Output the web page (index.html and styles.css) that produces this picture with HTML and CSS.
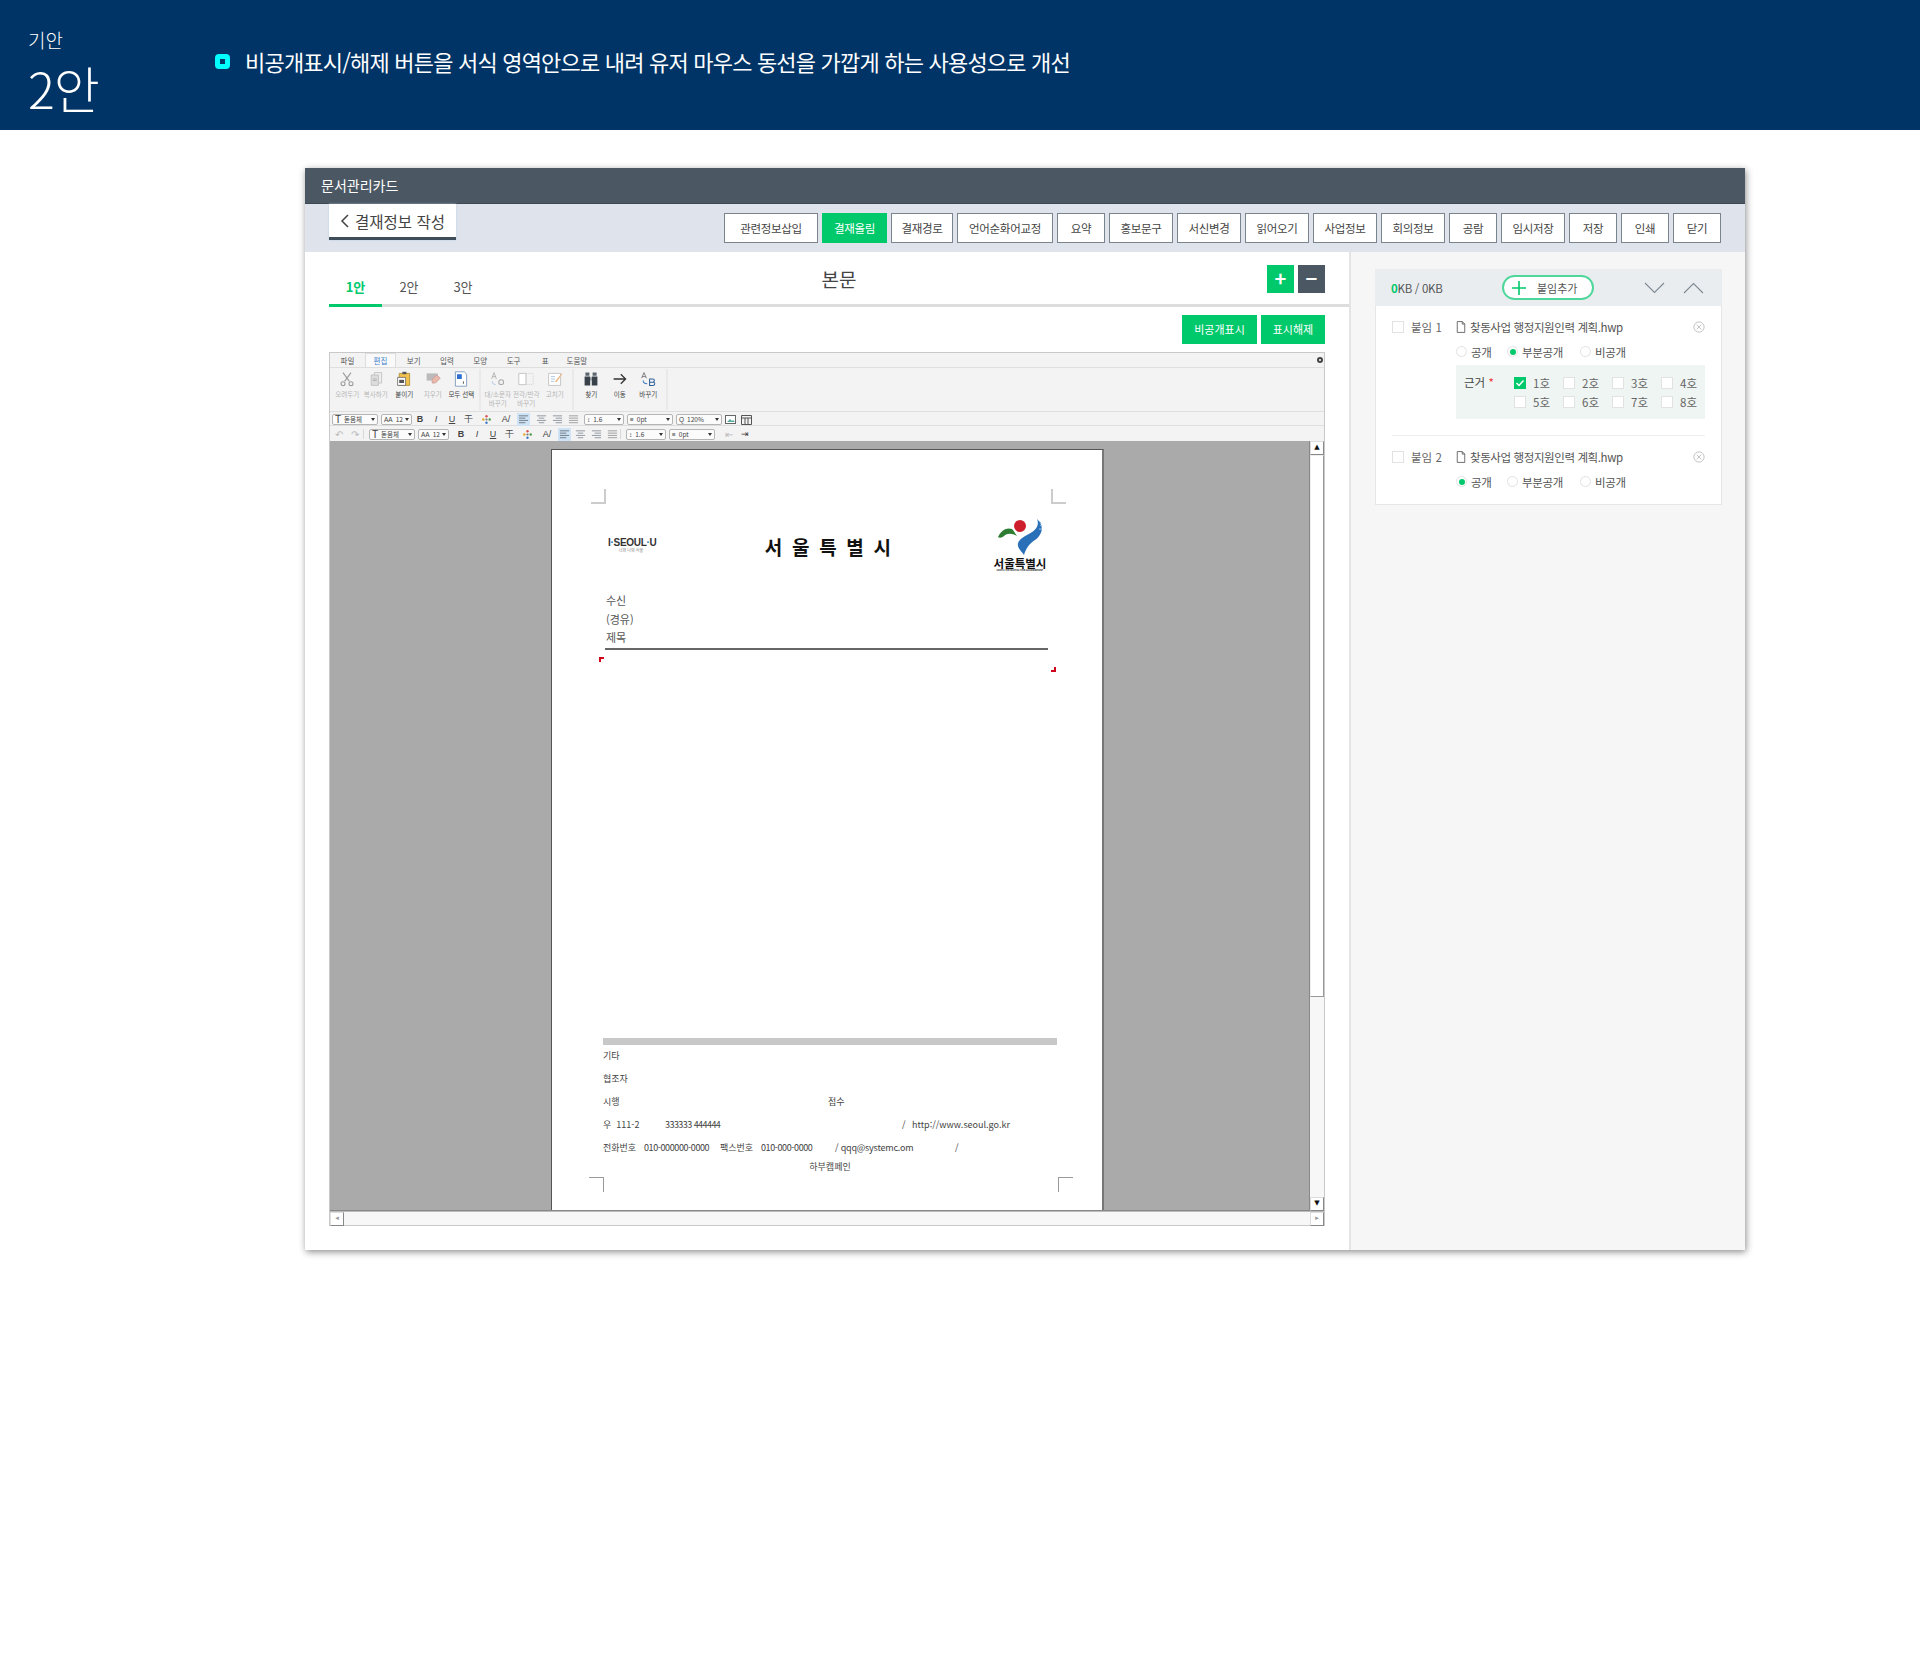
FILE: index.html
```html
<!DOCTYPE html>
<html lang="ko">
<head>
  <meta charset="UTF-8">
  <title>기안 2안</title>
  <link rel="stylesheet" href="styles.css">
</head>
<body>
  <svg class="defs" width="0" height="0">
    <symbol id="al" viewBox="0 0 12 12"><path d="M1 2h10M1 4.500h7M1 7h10M1 9.500h7" stroke="#6a7680" fill="none"/></symbol>
    <symbol id="ac" viewBox="0 0 12 12"><path d="M1 2h10M3 4.500h6M1 7h10M3 9.500h6" stroke="#8b949b" fill="none"/></symbol>
    <symbol id="ar" viewBox="0 0 12 12"><path d="M1 2h10M4 4.500h7M1 7h10M4 9.500h7" stroke="#8b949b" fill="none"/></symbol>
    <symbol id="aj" viewBox="0 0 12 12"><path d="M1 2h10M1 4.500h10M1 7h10M1 9.500h10" stroke="#9a9a9a" fill="none"/></symbol>
    <symbol id="pal" viewBox="0 0 12 12"><circle cx="6" cy="2.500" r="1.300" fill="#d9534f"/><circle cx="2.500" cy="6" r="1.300" fill="#e3a52b"/><circle cx="9.500" cy="6" r="1.300" fill="#4a9c4a"/><circle cx="6" cy="9.500" r="1.300" fill="#3a78c2"/><circle cx="6" cy="6" r="1.200" fill="#777"/></symbol>
    <symbol id="doc" viewBox="0 0 12 14"><path d="M1.500.5h6l3 3v10h-9z M7.500.5v3h3" fill="#fff" stroke="#555"/></symbol>
    <symbol id="x" viewBox="0 0 14 14"><circle cx="7" cy="7" r="6" fill="none" stroke="#bbb"/><path d="M4.300 4.300l5.400 5.400M9.700 4.300l-5.400 5.400" stroke="#bbb" fill="none"/></symbol>
  </svg>

  <!-- 상단 안내 -->
  <header class="top">
    <div class="top-label">
      <div class="top-small">기안</div>
      <div class="top-big">2안</div>
    </div>
    <div class="top-desc">
      <span class="bullet"></span>
      <span>비공개표시/해제 버튼을 서식 영역안으로 내려 유저 마우스 동선을 가깝게 하는 사용성으로 개선</span>
    </div>
  </header>

  <div class="stage">
    <section class="card">
      <div class="card-title">문서관리카드</div>

      <div class="band">
        <div class="back">
          <svg width="11" height="16" viewBox="0 0 11 16"><path d="M9 2L3 8l6 6" fill="none" stroke="#444" stroke-width="1.500"/></svg>
          <span>결재정보 작성</span>
        </div>
        <div class="band-btns">
          <button class="btn w94">관련정보삽입</button>
          <button class="btn w65 on">결재올림</button>
          <button class="btn w62">결재경로</button>
          <button class="btn w96">언어순화어교정</button>
          <button class="btn w48">요약</button>
          <button class="btn w64">홍보문구</button>
          <button class="btn w64">서신변경</button>
          <button class="btn w64">읽어오기</button>
          <button class="btn w64">사업정보</button>
          <button class="btn w64">회의정보</button>
          <button class="btn w48">공람</button>
          <button class="btn w64">임시저장</button>
          <button class="btn w48">저장</button>
          <button class="btn w48">인쇄</button>
          <button class="btn w48">닫기</button>
        </div>
      </div>

      <div class="card-body">
        <div class="main">
          <div class="main-head">
            <div class="tabs">
              <div class="tab active">1안</div>
              <div class="tab">2안</div>
              <div class="tab">3안</div>
            </div>
            <div class="main-title">본문</div>
            <div class="pm">
              <span class="pm-btn plus">+</span>
              <span class="pm-btn minus">−</span>
            </div>
          </div>

          <div class="mark-btns">
            <button class="mark w75">비공개표시</button>
            <button class="mark w64">표시해제</button>
          </div>

          <!-- 한글 편집기 영역 -->
          <div class="editor">
            <div class="menu">
              <span class="m m-first">파일</span>
              <span class="m m-on">편집</span>
              <span class="m">보기</span>
              <span class="m">입력</span>
              <span class="m">모양</span>
              <span class="m">도구</span>
              <span class="m m-s">표</span>
              <span class="m">도움말</span>
              <span class="gear"></span>
            </div>

            <div class="ribbon">
              <div class="r-item dim">
                <svg viewBox="0 0 20 20"><path d="M5 2l8 11M15 2L7 13" stroke="#999" fill="none" stroke-width="1.300"/><circle cx="5" cy="16" r="2.500" fill="none" stroke="#999" stroke-width="1.300"/><circle cx="15" cy="16" r="2.500" fill="none" stroke="#999" stroke-width="1.300"/></svg>
                <span>오려두기</span>
              </div>
              <div class="r-item dim">
                <svg viewBox="0 0 20 20"><path d="M8 2h9v13H8z" fill="#eee" stroke="#bbb"/><path d="M4 5h9v13H4z" fill="#ddd" stroke="#bbb"/><path d="M6 10h5M6 12h5" stroke="#aaa"/></svg>
                <span>복사하기</span>
              </div>
              <div class="r-item">
                <svg viewBox="0 0 20 20"><path d="M4 3h13v15H4z" fill="#f2c14e" stroke="#a98a2e"/><path d="M8 1h5v3H8z" fill="#555"/><path d="M2 8h10v10H2z" fill="#fff" stroke="#666"/><path d="M4 11h6v4H4z" fill="#555"/></svg>
                <span>붙이기</span>
              </div>
              <div class="r-item dim">
                <svg viewBox="0 0 20 20"><path d="M2 3h14v9H2z" fill="#bbb"/><path d="M9 10l6-5 4 4-6 6H9z" fill="#eab9a9" stroke="#c99"/></svg>
                <span>지우기</span>
              </div>
              <div class="r-item">
                <svg viewBox="0 0 20 20"><path d="M3 1h11l3 3v15H3z" fill="#fff" stroke="#6f8fb5"/><path d="M5 4h6v6H5z" fill="#2f6fd0"/><path d="M13 13v3" stroke="#333"/></svg>
                <span>모두 선택</span>
              </div>
              <div class="r-sep"></div>
              <div class="r-item dim">
                <svg viewBox="0 0 20 20"><path d="M2 10L5 2l3 8M3 7h4" fill="none" stroke="#aaa"/><path d="M3 13c0 3 2 4 4 4" fill="none" stroke="#9bbbe0"/><circle cx="14" cy="14" r="3" fill="none" stroke="#aaa" stroke-width="1.300"/></svg>
                <span>대/소문자<br>바꾸기</span>
              </div>
              <div class="r-item dim">
                <svg viewBox="0 0 20 20"><path d="M1 3h9v14H1z" fill="#fff" stroke="#bbb"/><path d="M10 3h9v14h-9z" fill="none" stroke="#ccc" stroke-dasharray="1.500 1.500"/></svg>
                <span>전각/반각<br>바꾸기</span>
              </div>
              <div class="r-item dim">
                <svg viewBox="0 0 20 20"><path d="M2 3h15v15H2z" fill="#fff" stroke="#bbb"/><path d="M5 7h5M5 10h5M5 13h4" stroke="#9bbbe0"/><path d="M10 13l8-10 1 1-7 10z" fill="#eab98a"/></svg>
                <span>고치기</span>
              </div>
              <div class="r-sep"></div>
              <div class="r-item">
                <svg viewBox="0 0 20 20"><path d="M3 2h5v4H3zM12 2h5v4h-5z" fill="#5d6670"/><path d="M2 7h7v11H2zM11 7h7v11h-7z" fill="#39414a"/><path d="M9 8h2v4H9z" fill="#8a939b"/></svg>
                <span>찾기</span>
              </div>
              <div class="r-item">
                <svg viewBox="0 0 20 20"><path d="M2 10h15M11 4l6 6-6 6" fill="none" stroke="#333" stroke-width="1.600"/></svg>
                <span>이동</span>
              </div>
              <div class="r-item">
                <svg viewBox="0 0 20 20"><path d="M2 9l3-7 3 7M3 7h4" fill="none" stroke="#666"/><path d="M4 12c0 3 2 4 5 4" fill="none" stroke="#3c7bc0" stroke-width="1.300"/><path d="M12 10h4a2 2 0 010 4h-4zM12 14h4.500a2 2 0 010 4H12z" fill="none" stroke="#2f5f99" stroke-width="1.300"/></svg>
                <span>바꾸기</span>
              </div>
              <div class="r-sep"></div>
            </div>

            <div class="tools t1">
              <span class="sel w46"><b class="big-t">T</b>돋움체</span>
              <span class="sel w31"><b>AA</b>12</span>
              <span class="ico back3"><b>B</b></span>
              <span class="ico"><i>I</i></span>
              <span class="ico"><u>U</u></span>
              <span class="ico">干</span>
              <span class="ico ico-w"><svg width="11" height="11"><use href="#pal"/></svg></span>
              <span class="ico ico-w">A/</span>
              <span class="ico ico-on"><svg width="11" height="11"><use href="#al"/></svg></span>
              <span class="ico ml2"><svg width="11" height="11"><use href="#ac"/></svg></span>
              <span class="ico"><svg width="11" height="11"><use href="#ar"/></svg></span>
              <span class="ico"><svg width="11" height="11"><use href="#aj"/></svg></span>
              <span class="sel w40 ml3"><b>↕</b>1.6</span>
              <span class="sel w46"><b>≡</b>0pt</span>
              <span class="sel w46"><b>Q</b>120%</span>
              <span class="ico back3"><svg width="11" height="11" viewBox="0 0 11 11"><rect x=".5" y="1.500" width="10" height="8" fill="#fff" stroke="#666"/><path d="M2 8l3-3 2 2 1-1 2 2z" fill="#5a9"/></svg></span>
              <span class="ico"><svg width="11" height="11" viewBox="0 0 11 11"><path d="M.5 1.500h10v9H.5zM.5 4h10M4 4v6.500M7 4v6.500" fill="none" stroke="#555"/></svg></span>
            </div>

            <div class="tools t2">
              <span class="ico undo">↶</span>
              <span class="ico undo">↷</span>
              <span class="t-sep"></span>
              <span class="sel w46"><b class="big-t">T</b>돋움체</span>
              <span class="sel w31"><b>AA</b>12</span>
              <span class="ico ml1"><b>B</b></span>
              <span class="ico"><i>I</i></span>
              <span class="ico"><u>U</u></span>
              <span class="ico">干</span>
              <span class="ico ico-w"><svg width="11" height="11"><use href="#pal"/></svg></span>
              <span class="ico ico-w">A/</span>
              <span class="ico ico-on"><svg width="11" height="11"><use href="#al"/></svg></span>
              <span class="ico"><svg width="11" height="11"><use href="#ac"/></svg></span>
              <span class="ico"><svg width="11" height="11"><use href="#ar"/></svg></span>
              <span class="ico"><svg width="11" height="11"><use href="#aj"/></svg></span>
              <span class="t-sep"></span>
              <span class="sel w40"><b>↕</b>1.6</span>
              <span class="sel w46"><b>≡</b>0pt</span>
              <span class="ico ml3 undo">⇤</span>
              <span class="ico">⇥</span>
            </div>

            <div class="view">
              <div class="gray">
                <div class="page">
                  <span class="crop c-tl"></span>
                  <span class="crop c-tr"></span>
                  <span class="crop c-bl"></span>
                  <span class="crop c-br"></span>
                  <span class="red r-a"></span>
                  <span class="red r-b"></span>

                  <div class="doc-head">
                    <div class="slogan">
                      <div class="slogan-en">I<em>·</em>SEOUL<em>·</em>U</div>
                      <div class="slogan-ko">너와 나의 서울</div>
                    </div>
                    <div class="doc-title">서 울 특 별 시</div>
                    <div class="emblem">
                      <svg width="46" height="38" viewBox="0 0 46 38">
                        <path d="M1 19C4 12 10 9 15 11c2 2 3 4 5 7-5-3-10-3-13 0-2 2-5 2-6 1z" fill="#2e7d32"/>
                        <circle cx="23" cy="8" r="6" fill="#cc1f2b"/>
                        <path d="M40 1c3 7-2 12-10 16-6 3-10 7-9 11 1 4 5 7 6 9 2-7 6-12 11-15 7-5 10-14 2-21z" fill="#2a70b8"/>
                        <path d="M41 2l3 3M43 7l2 1M42 11l3 0" stroke="#9cc4e8" fill="none"/>
                      </svg>
                      <div class="emblem-ko">서울특별시</div>
                      <div class="emblem-en">SEOUL METROPOLITAN GOVERNMENT</div>
                    </div>
                  </div>

                  <div class="doc-lines">
                    <div>수신</div>
                    <div>(경유)</div>
                    <div>제목</div>
                  </div>

                  <div class="doc-bar"></div>

                  <div class="foot">
                    <div class="foot-row"><span>기타</span></div>
                    <div class="foot-row"><span>협조자</span></div>
                    <div class="foot-row"><span class="f225">시행</span><span>접수</span></div>
                    <div class="foot-row"><span class="f62">우 &nbsp;111-2</span><span class="f237 tight-m">333333 444444</span><span class="f10">/</span><span>http://www.seoul.go.kr</span></div>
                    <div class="foot-row"><span class="f41">전화번호</span><span class="f76 tight">010-000000-0000</span><span class="f41">팩스번호</span><span class="f74 tight">010-000-0000</span><span class="f120 tight-s">/ qqq@systemc.om</span><span>/</span></div>
                    <div class="foot-end">하부캠페인</div>
                  </div>
                </div>
              </div>
              <div class="vscroll">
                <span class="sb-arrow">▲</span>
                <span class="sb-thumb"></span>
                <span class="sb-track"></span>
                <span class="sb-arrow">▼</span>
              </div>
            </div>

            <div class="hscroll">
              <span class="sb-arrow sb-dim">◂</span>
              <span class="sb-track"></span>
              <span class="sb-arrow sb-dim">▸</span>
            </div>
          </div>
        </div>

        <!-- 첨부 -->
        <aside class="side">
          <div class="att">
            <div class="att-head">
              <div class="att-size"><span class="g">0</span>KB / 0KB</div>
              <div class="att-add">
                <svg width="16" height="16" viewBox="0 0 16 16"><path d="M8 1v14M1 8h14" stroke="#00c96b" stroke-width="1.600" fill="none"/></svg>
                <span>붙임추가</span>
              </div>
              <div class="att-arrows">
                <svg width="21" height="12" viewBox="0 0 21 12"><path d="M1 1l9.500 9.500L20 1" fill="none" stroke="#7d8890" stroke-width="1.100"/></svg>
                <svg width="21" height="12" viewBox="0 0 21 12"><path d="M1 11l9.500-9.500L20 11" fill="none" stroke="#7d8890" stroke-width="1.100"/></svg>
              </div>
            </div>

            <div class="att-item first">
              <div class="att-row">
                <span class="box"></span>
                <span class="att-no">붙임 1</span>
                <svg class="att-doc" width="10" height="12"><use href="#doc"/></svg>
                <span class="att-name">찾동사업 행정지원인력 계획.hwp</span>
                <svg width="12" height="12"><use href="#x"/></svg>
              </div>
              <div class="radios">
                <label class="radio"><span class="dot"></span>공개</label>
                <label class="radio"><span class="dot on"></span>부분공개</label>
                <label class="radio"><span class="dot"></span>비공개</label>
              </div>
              <div class="basis">
                <div class="basis-label">근거 <em>*</em></div>
                <div class="basis-grid">
                  <label class="chk"><span class="box on"><svg width="12" height="12" viewBox="0 0 12 12"><path d="M2.500 6l2.500 2.500 4.500-5" fill="none" stroke="#fff" stroke-width="1.500"/></svg></span>1호</label>
                  <label class="chk"><span class="box"></span>2호</label>
                  <label class="chk"><span class="box"></span>3호</label>
                  <label class="chk"><span class="box"></span>4호</label>
                  <label class="chk"><span class="box"></span>5호</label>
                  <label class="chk"><span class="box"></span>6호</label>
                  <label class="chk"><span class="box"></span>7호</label>
                  <label class="chk"><span class="box"></span>8호</label>
                </div>
              </div>
            </div>

            <div class="att-item">
              <div class="att-row">
                <span class="box"></span>
                <span class="att-no">붙임 2</span>
                <svg class="att-doc" width="10" height="12"><use href="#doc"/></svg>
                <span class="att-name">찾동사업 행정지원인력 계획.hwp</span>
                <svg width="12" height="12"><use href="#x"/></svg>
              </div>
              <div class="radios">
                <label class="radio"><span class="dot on"></span>공개</label>
                <label class="radio"><span class="dot"></span>부분공개</label>
                <label class="radio"><span class="dot"></span>비공개</label>
              </div>
            </div>
          </div>
        </aside>
      </div>
    </section>
  </div>
</body>
</html>
```

FILE: styles.css
```css
* { box-sizing: border-box; }
body {
  margin: 0;
  background: #fff;
  color: #555;
  font-family: "Noto Sans CJK KR", "Noto Sans", sans-serif;
  font-size: 12px;
}
.defs { position: absolute; }
button { font-family: inherit; padding: 0; cursor: pointer; }

/* top */
.top {
  height: 130px;
  background: #003466;
  color: #fff;
  display: flex;
}
.top-label { width: 215px; padding: 26px 0 0 28px; }
.top-small { font-size: 19px; line-height: 28px; font-weight: 300; }
.top-big { font-size: 50px; line-height: 60px; margin-top: 3px; font-weight: 300; letter-spacing: -1px; }
.top-desc {
  display: flex;
  align-items: center;
  height: 122px;
  font-size: 22px;
  letter-spacing: -0.8px;
}
.bullet {
  width: 15px;
  height: 15px;
  border: 5px solid #00ffff;
  border-radius: 4px;
  margin-right: 15px;
  background: #003466;
}

/* card */
.stage { padding: 38px 0 40px 305px; }
.card {
  width: 1440px;
  height: 1082px;
  display: flex;
  flex-direction: column;
  background: #fff;
  box-shadow: 1px 2px 7px rgba(0, 0, 0, 0.45);
}
.card-title {
  height: 36px;
  background: #4b5863;
  color: #fff;
  font-size: 14px;
  line-height: 35px;
  padding-left: 16px;
  border-bottom: 1px solid #3e4852;
}
.band {
  height: 48px;
  background: #dfe4ec;
  display: flex;
  justify-content: space-between;
  padding: 0 24px;
}
.back {
  width: 127px;
  height: 36px;
  background: #fff;
  border-bottom: 3px solid #3f4c59;
  box-shadow: 0 0 2px #b9cde2;
  display: flex;
  align-items: center;
  gap: 5px;
  padding: 1px 0 0 10px;
  font-size: 15.500px;
  color: #444;
}
.band-btns { display: flex; gap: 4px; padding-top: 9px; }
.btn {
  height: 30px;
  border: 1px solid #79848d;
  background: #fff;
  color: #444;
  font-size: 11.500px;
  letter-spacing: -0.3px;
}
.btn.on { background: #00c96b; border-color: #00c96b; color: #fff; }
.w48 { width: 48px; }
.w62 { width: 62px; }
.w64 { width: 64px; }
.w65 { width: 65px; }
.w75 { width: 75px; }
.w94 { width: 94px; }
.w96 { width: 96px; }

.card-body { flex: 1; display: flex; min-height: 0; }
.main { width: 1044px; padding-left: 24px; background: #fff; }
.main-head {
  height: 55px;
  display: flex;
  border-bottom: 3px solid #ddd;
  padding-right: 24px;
}
.tabs { display: flex; align-items: flex-end; }
.tab {
  width: 54px;
  height: 30px;
  margin-bottom: -3px;
  text-align: center;
  line-height: 20px;
  font-size: 13px;
  border-bottom: 3px solid transparent;
}
.tab.active { width: 53px; color: #00c96b; border-color: #00c96b; font-weight: bold; }
.main-title {
  flex: 1;
  text-align: center;
  padding: 12px 79px 0 0;
  font-size: 19px;
  line-height: 30px;
  color: #444;
}
.pm { display: flex; gap: 4px; padding-top: 13px; }
.pm-btn {
  width: 27px;
  height: 28px;
  color: #fff;
  text-align: center;
  font-size: 20px;
  line-height: 26px;
  font-weight: bold;
}
.plus { background: #00c96b; }
.minus { background: #4b5863; }

.mark-btns {
  display: flex;
  justify-content: flex-end;
  gap: 4px;
  padding: 8px 24px 8px 0;
}
.mark {
  height: 29px;
  border: 0;
  background: #00c96b;
  color: #fff;
  font-size: 11px;
  line-height: 27px;
}

/* editor */
.editor {
  width: 996px;
  height: 874px;
  background: #f3f3f3;
  border: 1px solid #c9c9c9;
  display: flex;
  flex-direction: column;
}
.menu {
  height: 15px;
  display: flex;
  align-items: flex-end;
  font-size: 7.500px;
  color: #555;
  border-bottom: 1px solid #dedede;
  flex-shrink: 0;
}
.m { width: 33.300px; text-align: center; line-height: 13px; }
.m-first { width: 35px; }
.m-on {
  width: 31px;
  margin-right: 1px;
  background: #f9f9f9;
  border: 1px solid #ddd;
  border-bottom: 0;
  color: #3f7fcf;
}
.m-s { width: 30px; }
.gear {
  width: 6px;
  height: 6px;
  border-radius: 50%;
  border: 2px solid #444;
  margin: 0 1px 4px auto;
  background: #fff;
}
.ribbon {
  height: 44px;
  display: flex;
  border-bottom: 1px solid #dedede;
  flex-shrink: 0;
  padding-left: 3px;
}
.r-item {
  width: 28.500px;
  display: flex;
  flex-direction: column;
  align-items: center;
  text-align: center;
  font-size: 6.500px;
  line-height: 8.500px;
  color: #444;
  padding-top: 3px;
  white-space: nowrap;
}
.r-item svg { width: 16px; height: 16px; margin-bottom: 3px; }
.r-item.dim { color: #b5b5b5; }
.r-sep { width: 2px; background: #e9e9e9; margin: 1px 3px; }
.tools {
  height: 14px;
  display: flex;
  align-items: center;
  border-bottom: 1px solid #dedede;
  flex-shrink: 0;
  padding: 1px 0 0 2px;
  font-size: 6.500px;
  color: #444;
}
.t2 { height: 15px; padding-left: 1px; border-bottom: 0; }
.sel {
  height: 11px;
  margin-right: 3px;
  background: #fbfbfb;
  border: 1px solid #b5b5b5;
  border-radius: 2px;
  display: flex;
  align-items: center;
  gap: 3px;
  padding-left: 2px;
  line-height: 9px;
  position: relative;
}
.sel::after {
  content: "";
  position: absolute;
  right: 2px;
  top: 3px;
  border: 2.500px solid transparent;
  border-top: 3px solid #333;
  border-bottom: 0;
}
.sel b { font-weight: normal; font-family: "Liberation Sans", sans-serif; }
.big-t { font-size: 10px; }
.w31 { width: 31px; }
.w40 { width: 40px; }
.w46 { width: 46px; }
.ico {
  width: 16px;
  height: 13px;
  display: flex;
  align-items: center;
  justify-content: center;
  font-family: "Liberation Sans", sans-serif;
  font-size: 9px;
  color: #444;
}
.ico-w { width: 20px; }
.ico-on { width: 13px; margin: 0 1px; background: #cfe3f6; }
.undo { color: #bbb; font-size: 10px; }
.ml1 { margin-left: 1px; }
.ml2 { margin-left: 2px; }
.ml3 { margin-left: 3px; }
.back3 { margin-left: -3px; }
.t-sep { width: 1px; height: 10px; background: #d8d8d8; margin: 0 5px 0 0; }

.view { flex: 1; display: flex; min-height: 0; }
.gray {
  flex: 1;
  background: #aaa;
  padding: 8px 0 0 221px;
  border-bottom: 1px solid #888;
  border-right: 1px solid #888;
  overflow: hidden;
}
.page {
  position: relative;
  width: 553px;
  height: 762px;
  background: #fff;
  border: 1px solid #555;
  border-right: 2px solid #777;
  border-bottom: 0;
}
.crop { position: absolute; width: 15px; height: 15px; border: 0 solid #ccc; }
.c-tl { left: 39px; top: 39px; border-width: 0 2px 2px 0; }
.c-tr { left: 499px; top: 39px; border-width: 0 0 2px 2px; }
.c-bl { left: 37px; top: 727px; border-width: 1px 1px 0 0; border-color: #999; }
.c-br { left: 506px; top: 727px; border-width: 1px 0 0 1px; border-color: #999; }
.red { position: absolute; width: 5px; height: 5px; border: 0 solid #d0021b; }
.r-a { left: 47px; top: 207px; border-width: 2px 0 0 2px; }
.r-b { left: 499px; top: 217px; border-width: 0 2px 2px 0; }

.doc-head {
  margin: 68px 0 0 53px;
  width: 443px;
  height: 54px;
  display: flex;
  align-items: flex-start;
}
.slogan { width: 46px; margin: 19px 4px 0 3px; text-align: center; flex-shrink: 0; }
.slogan-en {
  font-family: "Liberation Sans", sans-serif;
  font-size: 10px;
  line-height: 11px;
  font-weight: bold;
  color: #333;
  letter-spacing: -0.3px;
  white-space: nowrap;
}
.slogan-en em { font-style: normal; color: #2a70b8; }
.slogan-ko { font-size: 4px; line-height: 5px; color: #777; white-space: nowrap; }
.doc-title {
  flex: 1;
  text-align: center;
  padding: 15px 0 0 8px;
  font-size: 19px;
  line-height: 28px;
  font-weight: bold;
  color: #111;
  letter-spacing: 2.200px;
  white-space: nowrap;
}
.emblem { width: 56px; text-align: center; flex-shrink: 0; line-height: 0; }
.emblem svg { display: block; margin: 0 0 1px 5px; }
.emblem-ko {
  font-size: 11.500px;
  line-height: 12px;
  font-weight: bold;
  color: #111;
  white-space: nowrap;
}
.emblem-en { font-size: 2.500px; line-height: 3px; font-weight: bold; color: #222; white-space: nowrap; }
.doc-lines {
  margin: 19px 0 0 53px;
  width: 443px;
  border-bottom: 2px solid #666;
  font-size: 11px;
  line-height: 18.500px;
  color: #555;
  padding: 0 0 1px 1px;
}
.doc-bar { margin: 388px 0 0 51px; width: 454px; height: 7px; background: #c8c8c8; }
.foot { margin: -1px 0 0 51px; width: 454px; font-size: 9px; color: #444; }
.foot-row { height: 23px; display: flex; align-items: center; white-space: nowrap; }
.foot-end { text-align: center; line-height: 15px; }
.tight { letter-spacing: -0.4px; }
.tight-m { letter-spacing: -0.55px; }
.tight-s { letter-spacing: -0.2px; }
.f10 { width: 10px; }
.f41 { width: 41px; }
.f62 { width: 62px; }
.f74 { width: 74px; }
.f76 { width: 76px; }
.f120 { width: 120px; }
.f225 { width: 225px; }
.f237 { width: 237px; }

.vscroll, .hscroll { display: flex; background: #f7f7f7; flex-shrink: 0; }
.vscroll { width: 14px; flex-direction: column; }
.hscroll { height: 14px; border-top: 1px solid #bbb; }
.sb-arrow {
  width: 14px;
  height: 14px;
  flex-shrink: 0;
  background: #fff;
  border: 1px solid #aaa;
  border-color: #ddd #888 #888 #ddd;
  text-align: center;
  font-family: "DejaVu Sans", sans-serif;
  font-size: 7px;
  line-height: 11px;
  color: #111;
}
.sb-dim { color: #999; }
.sb-thumb { height: 542px; background: #fff; border: 1px solid #bbb; border-color: #eee #999 #999 #eee; }
.sb-track { flex: 1; }

/* side */
.side {
  flex: 1;
  background: #f6f6f6;
  border-left: 2px solid #e4e4e4;
  padding: 17px 23px 0 24px;
  font-size: 11.500px;
}
.att { width: 347px; background: #fff; border: 1px solid #e6e6e6; }
.att-head {
  height: 37px;
  background: #e9edf0;
  display: flex;
  align-items: center;
  padding-left: 16px;
  margin: -1px -1px 0;
  width: 347px;
}
.att-size { width: 111px; letter-spacing: -0.3px; color: #555; }
.g { color: #00c96b; font-weight: bold; }
.att-add {
  width: 92px;
  height: 25px;
  border: 2px solid #4fd79b;
  border-radius: 13px;
  background: #fff;
  display: flex;
  align-items: center;
  gap: 10px;
  padding-left: 7px;
  font-size: 11px;
}
.att-arrows { display: flex; gap: 18px; margin-left: 50px; }
.att-item { margin: 0 16px; padding: 9px 0 10px; }
.att-item.first { border-bottom: 1px solid #eee; padding-bottom: 16px; }
.att-row { height: 24px; display: flex; align-items: center; }
.box {
  width: 12px;
  height: 12px;
  flex-shrink: 0;
  background: #fff;
  border: 1px solid #e2e2e2;
  line-height: 0;
}
.box.on { background: #00c96b; border-color: #00c96b; }
.box.on svg { margin: -1px; }
.att-no { width: 52px; padding-left: 7px; flex-shrink: 0; color: #666; }
.att-doc { flex-shrink: 0; margin-right: 4px; }
.att-name { flex: 1; letter-spacing: -0.4px; color: #555; white-space: nowrap; }
.radios { height: 25px; display: flex; align-items: center; padding-left: 64px; }
.radio { display: flex; align-items: center; gap: 4px; width: 73px; color: #555; letter-spacing: -0.3px; }
.radio:first-child { width: 51px; }
.dot {
  width: 11px;
  height: 11px;
  border-radius: 50%;
  background: #fff;
  border: 1px solid #e2e2e2;
  position: relative;
  flex-shrink: 0;
}
.dot.on::after {
  content: "";
  position: absolute;
  left: 1.500px;
  top: 1.500px;
  width: 6px;
  height: 6px;
  border-radius: 50%;
  background: #00c96b;
}
.basis {
  margin: 1px 0 0 64px;
  height: 54px;
  background: #eff5f2;
  display: flex;
  padding: 8px 0 0 8px;
}
.basis-label { width: 50px; line-height: 19px; color: #444; flex-shrink: 0; }
.basis-label em { color: #e33; font-style: normal; }
.basis-grid { display: grid; grid-template-columns: repeat(4, 49px); grid-auto-rows: 19px; }
.chk { display: flex; align-items: center; gap: 7px; color: #666; }
```
